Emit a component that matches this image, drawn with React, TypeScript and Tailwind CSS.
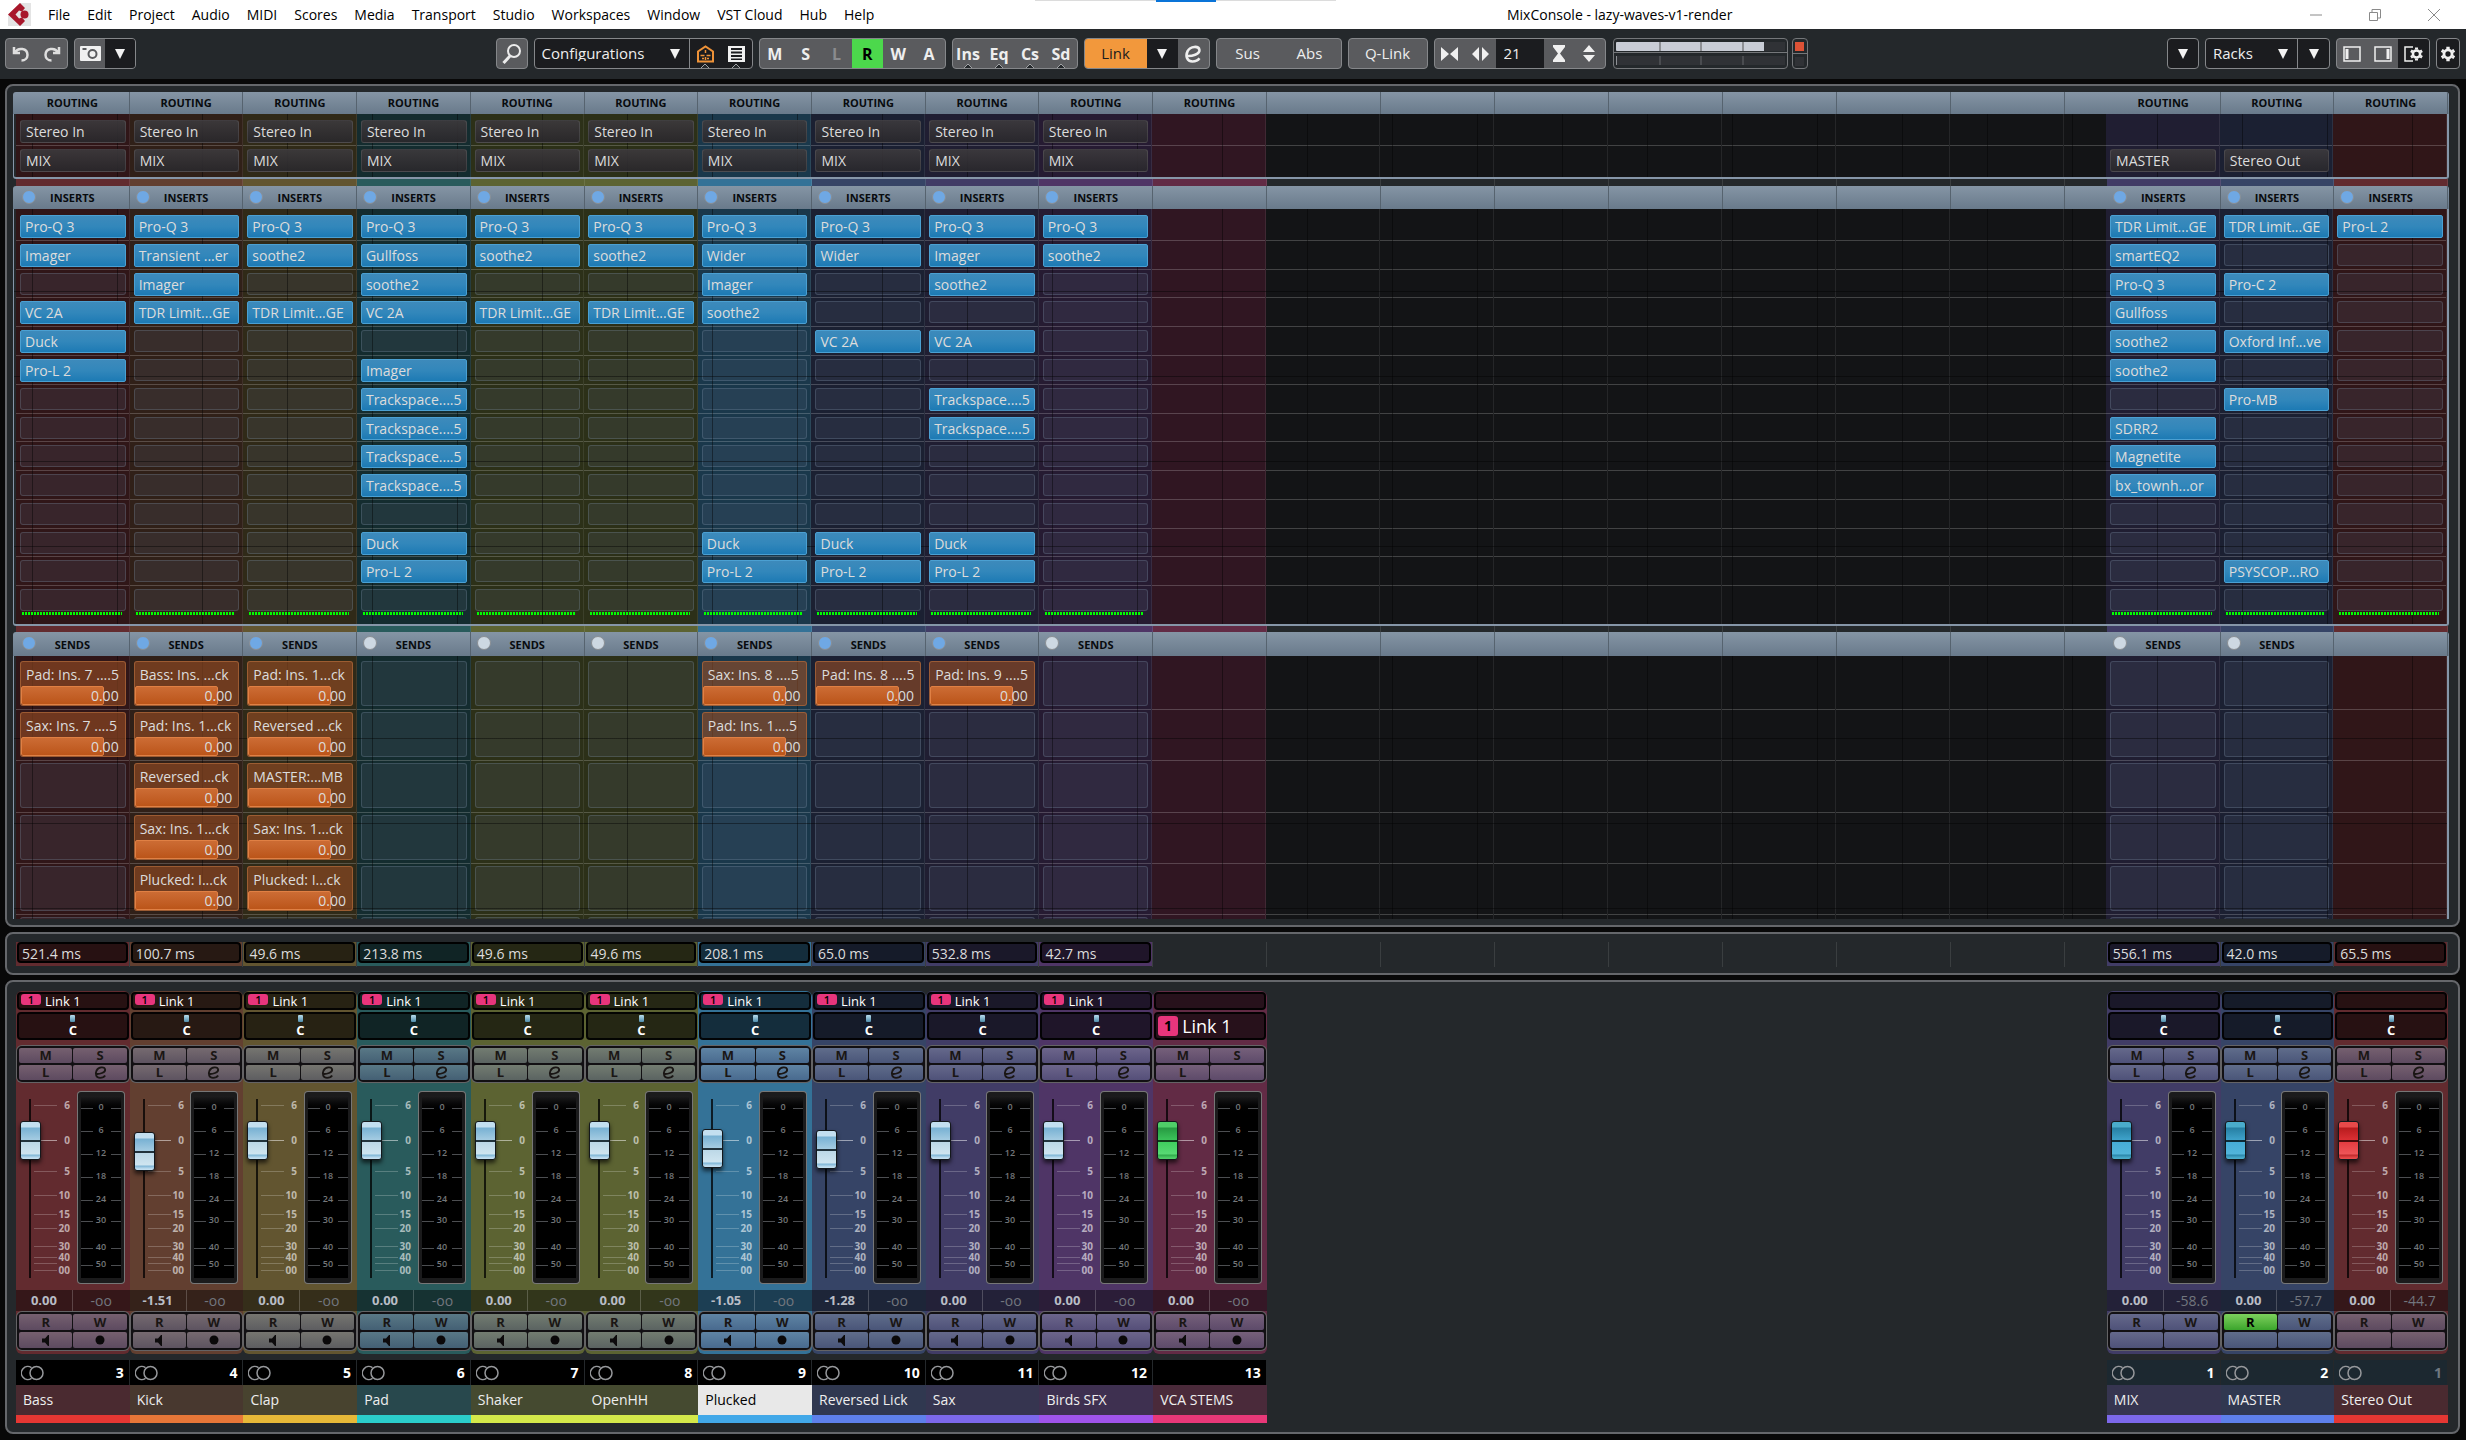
import { Fragment, type ReactNode } from 'react';
import clsx from 'clsx';

type Tone = {
  bright: string;
  dark: string;
  name: string;
  accent: string;
};

type Channel = {
  id: string;
  name: string;
  number: number;
  tone: Tone;
  kind: 'track' | 'vca' | 'group' | 'output';
  routing?: [string | null, string | null];
  inserts?: string[];
  sends?: string[];
  latency?: string;
  level: string;
  peak: string;
  travel: number;
  selected?: boolean;
  readOn?: boolean;
};

const RED: Tone = { bright: 'bg-[#622b2f]', dark: 'bg-[#301618]', name: 'bg-[#4a2a30]', accent: 'bg-[#e53733]' };
const ORANGE: Tone = { bright: 'bg-[#623f30]', dark: 'bg-[#302018]', name: 'bg-[#48382f]', accent: 'bg-[#e67638]' };
const AMBER: Tone = { bright: 'bg-[#625530]', dark: 'bg-[#302a18]', name: 'bg-[#48432f]', accent: 'bg-[#e6b838]' };
const TEAL: Tone = { bright: 'bg-[#295b5c]', dark: 'bg-[#142c2f]', name: 'bg-[#28484d]', accent: 'bg-[#2bcdcb]' };
const LIME: Tone = { bright: 'bg-[#5c6332]', dark: 'bg-[#2c3018]', name: 'bg-[#454a30]', accent: 'bg-[#d4e84a]' };
const SKY: Tone = { bright: 'bg-[#347297]', dark: 'bg-[#1a384b]', name: 'bg-[#e8e8e8]', accent: 'bg-[#42a8e8]' };
const BLUE: Tone = { bright: 'bg-[#364466]', dark: 'bg-[#1b2032]', name: 'bg-[#303850]', accent: 'bg-[#5e80ea]' };
const INDIGO: Tone = { bright: 'bg-[#413c66]', dark: 'bg-[#201e32]', name: 'bg-[#363550]', accent: 'bg-[#7c68ea]' };
const PURPLE: Tone = { bright: 'bg-[#4f3566]', dark: 'bg-[#261b32]', name: 'bg-[#3e3050]', accent: 'bg-[#a054ea]' };
const PINK: Tone = { bright: 'bg-[#622b45]', dark: 'bg-[#301622]', name: 'bg-[#4a2a3a]', accent: 'bg-[#e83878]' };

const INPUT: [string, string] = ['Stereo In', 'MIX'];

const TRACKS: Channel[] = [
  {
    id: 'bass', name: 'Bass', number: 3, tone: RED, kind: 'track', routing: INPUT,
    inserts: ['Pro-Q 3', 'Imager', '', 'VC 2A', 'Duck', 'Pro-L 2'],
    sends: ['Pad: Ins. 7 ....5', 'Sax: Ins. 7 ....5'],
    latency: '521.4 ms', level: '0.00', peak: '-oo', travel: 130
  },
  {
    id: 'kick', name: 'Kick', number: 4, tone: ORANGE, kind: 'track', routing: INPUT,
    inserts: ['Pro-Q 3', 'Transient ...er', 'Imager', 'TDR Limit...GE'],
    sends: ['Bass: Ins. ...ck', 'Pad: Ins. 1...ck', 'Reversed ...ck', 'Sax: Ins. 1...ck', 'Plucked: I...ck'],
    latency: '100.7 ms', level: '-1.51', peak: '-oo', travel: 119
  },
  {
    id: 'clap', name: 'Clap', number: 5, tone: AMBER, kind: 'track', routing: INPUT,
    inserts: ['Pro-Q 3', 'soothe2', '', 'TDR Limit...GE'],
    sends: ['Pad: Ins. 1...ck', 'Reversed ...ck', 'MASTER:...MB', 'Sax: Ins. 1...ck', 'Plucked: I...ck'],
    latency: '49.6 ms', level: '0.00', peak: '-oo', travel: 130
  },
  {
    id: 'pad', name: 'Pad', number: 6, tone: TEAL, kind: 'track', routing: INPUT,
    inserts: [
      'Pro-Q 3', 'Gullfoss', 'soothe2', 'VC 2A', '', 'Imager', 'Trackspace....5', 'Trackspace....5',
      'Trackspace....5', 'Trackspace....5', '', 'Duck', 'Pro-L 2'
    ],
    sends: [],
    latency: '213.8 ms', level: '0.00', peak: '-oo', travel: 130
  },
  {
    id: 'shaker', name: 'Shaker', number: 7, tone: LIME, kind: 'track', routing: INPUT,
    inserts: ['Pro-Q 3', 'soothe2', '', 'TDR Limit...GE'], sends: [],
    latency: '49.6 ms', level: '0.00', peak: '-oo', travel: 130
  },
  {
    id: 'openhh', name: 'OpenHH', number: 8, tone: LIME, kind: 'track', routing: INPUT,
    inserts: ['Pro-Q 3', 'soothe2', '', 'TDR Limit...GE'], sends: [],
    latency: '49.6 ms', level: '0.00', peak: '-oo', travel: 130
  },
  {
    id: 'plucked', name: 'Plucked', number: 9, tone: SKY, kind: 'track', routing: INPUT,
    inserts: ['Pro-Q 3', 'Wider', 'Imager', 'soothe2', '', '', '', '', '', '', '', 'Duck', 'Pro-L 2'],
    sends: ['Sax: Ins. 8 ....5', 'Pad: Ins. 1....5'],
    latency: '208.1 ms', level: '-1.05', peak: '-oo', travel: 122, selected: true
  },
  {
    id: 'reversed', name: 'Reversed Lick', number: 10, tone: BLUE, kind: 'track', routing: INPUT,
    inserts: ['Pro-Q 3', 'Wider', '', '', 'VC 2A', '', '', '', '', '', '', 'Duck', 'Pro-L 2'],
    sends: ['Pad: Ins. 8 ....5'],
    latency: '65.0 ms', level: '-1.28', peak: '-oo', travel: 121
  },
  {
    id: 'sax', name: 'Sax', number: 11, tone: INDIGO, kind: 'track', routing: INPUT,
    inserts: [
      'Pro-Q 3', 'Imager', 'soothe2', '', 'VC 2A', '', 'Trackspace....5', 'Trackspace....5', '', '', '', 'Duck', 'Pro-L 2'
    ],
    sends: ['Pad: Ins. 9 ....5'],
    latency: '532.8 ms', level: '0.00', peak: '-oo', travel: 130
  },
  {
    id: 'birds', name: 'Birds SFX', number: 12, tone: PURPLE, kind: 'track', routing: INPUT,
    inserts: ['Pro-Q 3', 'soothe2'], sends: [],
    latency: '42.7 ms', level: '0.00', peak: '-oo', travel: 130
  },
  { id: 'vca', name: 'VCA STEMS', number: 13, tone: PINK, kind: 'vca', level: '0.00', peak: '-oo', travel: 130 }
];

const OUTPUTS: Channel[] = [
  {
    id: 'mix', name: 'MIX', number: 1, tone: INDIGO, kind: 'group', routing: [null, 'MASTER'],
    inserts: [
      'TDR Limit...GE', 'smartEQ2', 'Pro-Q 3', 'Gullfoss', 'soothe2', 'soothe2', '', 'SDRR2', 'Magnetite', 'bx_townh...or'
    ],
    sends: [], latency: '556.1 ms', level: '0.00', peak: '-58.6', travel: 130
  },
  {
    id: 'master', name: 'MASTER', number: 2, tone: BLUE, kind: 'group', routing: [null, 'Stereo Out'],
    inserts: ['TDR Limit...GE', '', 'Pro-C 2', '', 'Oxford Inf...ve', '', 'Pro-MB', '', '', '', '', '', 'PSYSCOP...RO'],
    sends: [], latency: '42.0 ms', level: '0.00', peak: '-57.7', travel: 130, readOn: true
  },
  {
    id: 'out', name: 'Stereo Out', number: 1, tone: RED, kind: 'output',
    inserts: ['Pro-L 2'], latency: '65.5 ms', level: '0.00', peak: '-44.7', travel: 130
  }
];

const MENUS = [
  'File', 'Edit', 'Project', 'Audio', 'MIDI', 'Scores', 'Media', 'Transport', 'Studio',
  'Workspaces', 'Window', 'VST Cloud', 'Hub', 'Help'
];

const EMPTY_COLUMNS = [0, 1, 2, 3, 4, 5, 6, 7];
const INSERT_ROWS = Array.from({ length: 14 }, (_, i) => i);
const SEND_ROWS = [0, 1, 2, 3, 4, 5];

// [label, y of the tick]
const FADER_MARKS: [string, number][] = [
  ['6', 22], ['0', 57], ['5', 88], ['10', 112], ['15', 131], ['20', 145], ['30', 163], ['40', 174], ['', 180], ['00', 187]
];
const METER_MARKS: [string, number][] = [
  ['0', 17], ['6', 40], ['12', 63], ['18', 86], ['24', 109], ['30', 130], ['40', 157], ['50', 174]
];

export default function App() {
  return (
    <div className="min-h-screen bg-[#080808] font-['Open_Sans','Noto_Sans',sans-serif] text-sm text-[#dcdcdc]">
      <MenuBar />
      <Toolbar />
      <main className="mr-[6px] ml-[5px] flex flex-col gap-[5px] pt-[5px]">
        <Panel className="pt-[6px] pr-[9px] pb-[6px] pl-[6px]">
          <Racks />
        </Panel>
        <Panel className="pt-2 pr-[10px] pb-[6px] pl-[9px]">
          <ConsoleRow render={(channel) => <LatencyCell channel={channel} />} />
        </Panel>
        <Panel className="pt-[9px] pr-[10px] pb-[9px] pl-[9px]">
          <ConsoleRow render={(channel) => (channel ? <Strip channel={channel} /> : null)} />
        </Panel>
      </main>
    </div>
  );
}

function Panel({ className, children }: { className: string; children: ReactNode }) {
  return (
    <section className={clsx('rounded-lg border-2 border-[#65676b] bg-[#24282b]', className)}>{children}</section>
  );
}

/** Lays one cell per channel: tracks left, unused columns in between, outputs right. */
function ConsoleRow({ render }: { render: (channel: Channel | null) => ReactNode }) {
  return (
    <div className="grid grid-cols-[minmax(0,11fr)_840px_minmax(0,3fr)]">
      <div className="grid grid-cols-11">
        {TRACKS.map((channel) => (
          <Fragment key={channel.id}>{render(channel)}</Fragment>
        ))}
      </div>
      <div className="flex overflow-hidden">
        {EMPTY_COLUMNS.map((column) => (
          <div key={column} className="w-[114px] shrink-0">
            {render(null)}
          </div>
        ))}
      </div>
      <div className="grid grid-cols-3">
        {OUTPUTS.map((channel) => (
          <Fragment key={channel.id}>{render(channel)}</Fragment>
        ))}
      </div>
    </div>
  );
}

/* ---------- title and toolbar ---------- */

function MenuBar() {
  return (
    <header className="relative flex h-[29px] items-center bg-white text-black">
      <div className="absolute top-0 left-[1035px] flex h-px w-[301px] justify-center bg-[#dcdcdc]">
        <span className="h-[2px] w-[60px] bg-[#0a74d8]" />
      </div>
      <svg className="mr-[17px] ml-2 h-[23px] w-[23px]" viewBox="0 0 23 23" aria-hidden="true">
        <path d="M12 0h11v23H0V12z" fill="#e4e4e4" />
        <path d="M12 0 17 5l-3 3.500-3-1-3.500 4 3.500 4 3-1 3 3.500L12 23 0 11.500z" fill="#a8172b" />
        <circle cx="16.500" cy="11.500" r="4" fill="#a8172b" />
      </svg>
      <nav className="flex gap-[17px]">
        {MENUS.map((menu) => (
          <button key={menu} type="button">
            {menu}
          </button>
        ))}
      </nav>
      <span className="flex-8" />
      <h1>MixConsole - lazy-waves-v1-render</h1>
      <span className="flex-7" />
      <div className="flex text-[#8a8a8a]">
        <button type="button" aria-label="Minimize" className="flex w-[59px] justify-center">
          <svg className="size-3" viewBox="0 0 12 12"><path d="M0 6h12" stroke="currentColor" /></svg>
        </button>
        <button type="button" aria-label="Restore" className="flex w-[59px] justify-center">
          <svg className="size-3" viewBox="0 0 12 12" fill="none" stroke="currentColor">
            <path d="M.5 3.500h8v8h-8zM3 3V.5h8.500V9H9" />
          </svg>
        </button>
        <button type="button" aria-label="Close" className="mr-[3px] flex w-[59px] justify-center">
          <svg className="size-3" viewBox="0 0 12 12"><path d="M0 0l12 12M12 0L0 12" stroke="currentColor" /></svg>
        </button>
      </div>
    </header>
  );
}

function Group({ dark, className, children }: { dark?: boolean; className?: string; children: ReactNode }) {
  return (
    <div
      className={clsx(
        'relative flex h-[31px] items-stretch overflow-hidden rounded border border-[#85878a]',
        dark ? 'bg-[#1b1c1f]' : 'bg-[#5a5b5e]',
        className
      )}
    >
      {children}
    </div>
  );
}

function ToolButton({ label, className, children }: { label?: string; className?: string; children: ReactNode }) {
  return (
    <button type="button" aria-label={label} className={clsx('relative flex flex-1 items-center justify-center', className)}>
      {children}
    </button>
  );
}

function Triangle() {
  return (
    <svg className="h-[10px] w-[10px]" viewBox="0 0 10 10" aria-hidden="true">
      <path d="M0 0h10L5 10z" fill="#f2f2f2" />
    </svg>
  );
}

function Notch() {
  return (
    <svg className="absolute bottom-[-1px] left-1/2 -ml-[5px] h-[5px] w-[10px]" viewBox="0 0 10 5" aria-hidden="true">
      <path d="M0 5 5 0l5 5" fill="#24282b" stroke="#a0a2a5" />
    </svg>
  );
}

function EditGlyph({ className }: { className: string }) {
  return (
    <svg className={className} viewBox="0 0 14 14" fill="none" stroke="currentColor" strokeWidth="2" aria-hidden="true">
      <path d="M2 8.500C6 9 12.500 7 12 3.800 11.500.5 5 .6 2.800 4.800.8 9 2.500 12.800 6.500 12.800c2.300 0 4.500-1 5.500-2.500" />
    </svg>
  );
}

function Toolbar() {
  return (
    <div className="flex h-[50px] items-start justify-between bg-[#24282b] pt-[9px] pr-[6px] pl-[5px] text-[15px] text-[#eeeeee]">
      <div className="flex gap-[6px]">
        <Group className="w-[63px]">
          <ToolButton label="Undo">
            <svg className="size-5" viewBox="0 0 20 20" fill="none" stroke="#dedede" strokeWidth="2.500">
              <path d="M3 3v6h6M4 8.500C7 3 16.500 4 16.500 11c0 3-2.500 5.500-6 5.500" />
            </svg>
          </ToolButton>
          <ToolButton label="Redo">
            <svg className="size-5" viewBox="0 0 20 20" fill="none" stroke="#dedede" strokeWidth="2.500">
              <path d="M17 3v6h-6M16 8.500C13 3 3.500 4 3.500 11c0 3 2.500 5.500 6 5.500" />
            </svg>
          </ToolButton>
        </Group>
        <Group className="w-[62px]">
          <ToolButton label="Snapshots">
            <svg className="h-[15px] w-[21px]" viewBox="0 0 21 15" aria-hidden="true">
              <rect width="21" height="15" rx="1" fill="#f0f0f0" />
              <circle cx="12.500" cy="8" r="4" fill="none" stroke="#5a5b5e" strokeWidth="2" />
              <path d="M2.500 3h4" stroke="#5a5b5e" strokeWidth="2" />
            </svg>
          </ToolButton>
          <ToolButton label="Snapshot list" className="bg-[#1b1c1f]">
            <Triangle />
          </ToolButton>
        </Group>
      </div>

      <div className="flex gap-[6px]">
        <Group className="w-[32px]">
          <ToolButton label="Find">
            <svg className="h-[22px] w-5" viewBox="0 0 20 22" fill="none" stroke="#ececec" strokeWidth="2">
              <circle cx="12" cy="8" r="6" />
              <path d="M8 13 1.500 20" strokeWidth="3" />
            </svg>
          </ToolButton>
        </Group>
        <Group dark className="w-[219px]">
          <label className="flex w-[155px] items-center border-r border-[#85878a] pl-[7px]">
            <select className="w-[128px] appearance-none leading-none outline-none" aria-label="Configurations">
              <option>Configurations</option>
            </select>
            <Triangle />
          </label>
          <ToolButton label="Visibility">
            <svg className="h-[18px] w-[17px]" viewBox="0 0 17 18" fill="none" stroke="#ee9238" strokeWidth="2">
              <path d="M1 16.500V6.500L8.500 1.500 16 6.500V16.500z" />
              <path d="M8.500 5v3M8.500 12v3M3.500 10.500h4M9.500 10.500h4M5 13.500h2M10 13.500h2" strokeWidth="1.500" />
            </svg>
            <Notch />
          </ToolButton>
          <ToolButton label="Channel list">
            <svg className="h-[16px] w-[17px]" viewBox="0 0 17 16" aria-hidden="true">
              <path d="M0 0h17v16H0zM3 2v2h11V2zM3 5.500v2h11v-2zM3 9v2h11V9zM3 12.500v1.500h11v-1.500z" fill="#f0f0f0" fillRule="evenodd" />
            </svg>
            <Notch />
          </ToolButton>
        </Group>
        <Group className="w-[187px] text-base font-bold">
          {['M', 'S', 'L', 'R', 'W', 'A'].map((letter) => (
            <ToolButton
              key={letter}
              className={clsx(letter === 'R' && 'bg-[#4cd84c] text-black', letter === 'L' && 'text-[#8a8b8e]')}
            >
              {letter}
            </ToolButton>
          ))}
        </Group>
        <Group className="w-[126px] text-base font-bold">
          {['Ins', 'Eq', 'Cs', 'Sd'].map((rack) => (
            <ToolButton key={rack}>
              {rack}
              <Notch />
            </ToolButton>
          ))}
        </Group>
        <Group className="w-[126px]">
          <ToolButton className="flex-2 bg-[#f2983c] text-[#1c1c1c]">Link</ToolButton>
          <ToolButton label="Link options" className="bg-[#1b1c1f]">
            <Triangle />
          </ToolButton>
          <ToolButton label="Edit">
            <EditGlyph className="size-[18px]" />
          </ToolButton>
        </Group>
        <Group className="w-[126px]">
          <ToolButton>Sus</ToolButton>
          <ToolButton>Abs</ToolButton>
        </Group>
        <Group className="w-[80px]">
          <ToolButton>Q-Link</ToolButton>
        </Group>
        <Group className="w-[172px]">
          <ToolButton label="Narrow channels">
            <svg className="h-[14px] w-[17px]" viewBox="0 0 17 14"><path d="M0 0v14l8-7zM17 0v14L9 7z" fill="#f0f0f0" /></svg>
          </ToolButton>
          <ToolButton label="Widen channels">
            <svg className="h-[14px] w-[17px]" viewBox="0 0 17 14"><path d="M7 0v14L0 7zM10 0v14l7-7z" fill="#f0f0f0" /></svg>
          </ToolButton>
          <input
            aria-label="Channel width"
            defaultValue="21"
            className="w-12 bg-[#1b1c1f] pl-2 outline-none"
          />
          <ToolButton label="Lower racks">
            <svg className="h-[17px] w-[14px]" viewBox="0 0 14 17"><path d="M1 0h12v2L8 8.500l5 6.500v2H1v-2l5-6.500L1 2z" fill="#f0f0f0" /></svg>
          </ToolButton>
          <ToolButton label="Raise racks">
            <svg className="h-[17px] w-[14px]" viewBox="0 0 14 17"><path d="M7 0l6 7H1zM7 17l6-7H1z" fill="#f0f0f0" /></svg>
          </ToolButton>
        </Group>
        <PerformanceMeter />
      </div>

      <div className="flex gap-[6px]">
        <Group dark className="w-8">
          <ToolButton label="Toolbar options">
            <Triangle />
          </ToolButton>
        </Group>
        <Group dark className="w-[125px]">
          <label className="flex w-[92px] items-center border-r border-[#85878a] pl-[7px]">
            <select className="w-[65px] appearance-none leading-none outline-none" aria-label="Racks">
              <option>Racks</option>
            </select>
            <Triangle />
          </label>
          <ToolButton label="Rack options">
            <Triangle />
          </ToolButton>
        </Group>
        <Group className="w-[94px]">
          <ToolButton label="Left zone">
            <svg className="h-4 w-[18px]" viewBox="0 0 18 16" fill="none" stroke="#f0f0f0">
              <path d="M1 1h16v14H1z" strokeWidth="1.500" />
              <path d="M4 3v10" strokeWidth="3" />
            </svg>
          </ToolButton>
          <ToolButton label="Right zone">
            <svg className="h-4 w-[18px]" viewBox="0 0 18 16" fill="none" stroke="#f0f0f0">
              <path d="M1 1h16v14H1z" strokeWidth="1.500" />
              <path d="M14 3v10" strokeWidth="3" />
            </svg>
          </ToolButton>
          <ToolButton label="Window layout" className="bg-[#1b1c1f]">
            <svg className="h-4 w-[19px]" viewBox="0 0 19 16" fill="none" stroke="#f0f0f0">
              <path d="M9 1H1v14h8" strokeWidth="1.500" />
              <Cog x={12.5} y={8} />
            </svg>
          </ToolButton>
        </Group>
        <Group dark className="w-6">
          <ToolButton label="Set up toolbar">
            <svg className="size-[18px]" viewBox="0 0 16 16" fill="none" stroke="#f0f0f0">
              <Cog x={8} y={8} />
            </svg>
          </ToolButton>
        </Group>
      </div>
    </div>
  );
}

function Cog({ x, y }: { x: number; y: number }) {
  return (
    <g transform={`translate(${x} ${y})`}>
      <circle r="3.600" strokeWidth="2.500" />
      <path
        d="M0-4.500V-6.500M0 4.500V6.500M3.900-2.250 5.600-3.250M3.900 2.250 5.600 3.250M-3.900-2.250-5.600-3.250M-3.900 2.250-5.600 3.250"
        strokeWidth="3"
      />
    </g>
  );
}

function PerformanceMeter() {
  return (
    <div className="flex gap-1 pl-px">
      <div className="flex h-[31px] w-[175px] flex-col rounded border border-[#75777a]">
        <div className="flex flex-1 border-b border-[#75777a] px-[2px] pt-[3px]">
          <div className="flex h-[9px] w-full bg-[#303236]">
            <span className="w-[43px] rounded-l-[1px] bg-[#c9cdd6]" />
            <span className="w-[41px] border-l-2 border-[#8e9095] bg-[#c9cdd6]" />
            <span className="w-[42px] border-l-2 border-[#8e9095] bg-[#c9cdd6]" />
            <span className="w-[22px] border-l-2 border-[#8e9095] bg-[#c9cdd6]" />
          </div>
        </div>
        <div className="flex flex-1 px-[2px] py-[3px]">
          <div className="flex w-full bg-[#303236]">
            <span className="w-[43px] border-l border-[#8e9095]" />
            <span className="w-[41px] border-l-2 border-[#4a4c50]" />
            <span className="w-[42px] border-l-2 border-[#4a4c50]" />
            <span className="flex-1 border-l-2 border-[#4a4c50]" />
          </div>
        </div>
      </div>
      <div className="flex h-[31px] w-4 flex-col rounded border border-[#75777a]">
        <span className="flex flex-1 items-center justify-center border-b border-[#75777a]">
          <span className="size-[9px] bg-[#dd5236]" />
        </span>
        <span className="flex flex-1 items-center justify-center">
          <span className="size-[9px] bg-[#303236]" />
        </span>
      </div>
    </div>
  );
}

/* ---------- racks ---------- */

function Racks() {
  return (
    <>
      <RackHeader
        className="h-[22px] leading-[22px]"
        render={(channel) => <HeaderCell title={channel ? 'ROUTING' : null} />}
      />
      <RackBody className="h-[65px] rounded-b-[3px] border-b-2">
        <ConsoleRow render={(channel) => <RoutingCell channel={channel} />} />
      </RackBody>
      <ToneStripe className="h-[7px]" />

      <RackHeader
        className="h-[23px] leading-6"
        render={(channel) => <HeaderCell title={channel?.inserts ? 'INSERTS' : null} active />}
      />
      <RackBody className="h-[417px] rounded-b-[3px] border-b-2">
        <ConsoleRow render={(channel) => <InsertCell channel={channel} />} />
      </RackBody>
      <ToneStripe className="h-[6px]" />

      <RackHeader
        className="h-[24px] leading-[26px]"
        render={(channel) => (
          <HeaderCell title={channel?.sends ? 'SENDS' : null} active={Boolean(channel?.sends?.length)} />
        )}
      />
      <RackBody className="h-[263px]">
        <ConsoleRow render={(channel) => <SendCell channel={channel} />} />
      </RackBody>
    </>
  );
}

function RackHeader({ className, render }: { className: string; render: (channel: Channel | null) => ReactNode }) {
  return (
    <div
      className={clsx(
        'overflow-hidden rounded-t-[3px] bg-linear-to-b from-[#8595a5] to-[#697a8b] pr-px pl-[3px]',
        className
      )}
    >
      <ConsoleRow render={render} />
    </div>
  );
}

function HeaderCell({ title, active }: { title: string | null; active?: boolean }) {
  return (
    <div className="relative h-6 border-r border-[#56636f] text-center font-bold text-[#080b0e]">
      {title && title !== 'ROUTING' ? (
        <span
          className={clsx(
            'absolute top-1 left-[6px] size-[14px] rounded-full border border-[#8a8f94]',
            active ? 'bg-[#6fa8e4]' : 'bg-[#cdd8e2]'
          )}
        />
      ) : null}
      {title ? <p className="text-[11px] leading-[inherit]">{title}</p> : null}
    </div>
  );
}

function RackBody({ className, children }: { className: string; children: ReactNode }) {
  return (
    <div className={clsx('relative overflow-hidden border-r-2 border-l border-[#8696a8] pl-[2px]', className)}>
      {children}
      <div className="pointer-events-none absolute inset-0 bg-[repeating-linear-gradient(to_right,transparent_0_18px,#00000068_18px_19px,transparent_19px_85px),repeating-linear-gradient(to_bottom,transparent_0_82px,#00000068_82px_83px,transparent_83px_85px)]" />
    </div>
  );
}

function ToneStripe({ className }: { className: string }) {
  return (
    <div className="pr-px pl-[3px]">
      <ConsoleRow
        render={(channel) => (
          <div className={clsx('border-r border-white/10', className, channel?.tone.bright)} />
        )}
      />
    </div>
  );
}

function Column({ channel, className, children }: { channel: Channel | null; className: string; children: ReactNode }) {
  return (
    <div className={clsx('border-r border-white/8 pt-[3px]', className, channel ? channel.tone.dark : 'bg-[#131416]')}>
      {children}
    </div>
  );
}

function RoutingCell({ channel }: { channel: Channel | null }) {
  return (
    <Column channel={channel} className="h-[63px]">
      {[0, 1].map((row) => (
        <div key={row} className={clsx('h-[29px] pt-[3px] pr-[3px] pl-1', row === 0 && 'border-b border-white/20')}>
          {channel?.routing?.[row] ? (
            <button
              type="button"
              className="relative z-10 block h-[23px] w-full rounded-[3px] border border-white/10 bg-linear-to-b from-[#3d3a3d]/90 to-[#2a282c]/90 pl-[5px] text-left leading-[22px]"
            >
              {channel.routing[row]}
            </button>
          ) : null}
        </div>
      ))}
    </Column>
  );
}

function InsertCell({ channel }: { channel: Channel | null }) {
  return (
    <Column channel={channel} className="h-[415px]">
      <div className="grid h-[403px] grid-rows-14">
        {INSERT_ROWS.map((row) => (
          <div key={row} className={clsx('pt-[3px] pr-[3px] pl-1', row < 13 && 'border-b border-white/20')}>
            {channel?.inserts ? <InsertSlot plugin={channel.inserts[row]} /> : null}
            {channel?.inserts && row === 13 ? (
              <div className="relative z-10 mt-px mr-1 ml-[2px] h-[3px] bg-[repeating-linear-gradient(to_right,#00ff00_0_2px,transparent_2px_3px)]" />
            ) : null}
          </div>
        ))}
      </div>
    </Column>
  );
}

function InsertSlot({ plugin }: { plugin?: string }) {
  if (!plugin) {
    return (
      <button
        type="button"
        aria-label="Empty insert"
        className="block h-[22px] w-full rounded-[3px] border border-[#8aa0b8]/25 bg-[#5a6478]/20"
      />
    );
  }
  return (
    <button
      type="button"
      className="relative z-10 block h-[23px] w-full overflow-hidden rounded-[2px] border border-[#4ba0d2] bg-linear-to-b from-[#3d8abb] via-[#3287bb] to-[#1c7ab4] pl-1 text-left leading-[22px] whitespace-nowrap"
    >
      {plugin}
    </button>
  );
}

function SendCell({ channel }: { channel: Channel | null }) {
  return (
    <Column channel={channel} className="h-[310px]">
      <div className="grid h-[307px] grid-rows-6">
        {SEND_ROWS.map((row) => (
          <div key={row} className="border-b border-white/20 pt-[2px] pr-[3px] pl-1">
            {channel?.sends ? <SendSlot target={channel.sends[row]} /> : null}
          </div>
        ))}
      </div>
    </Column>
  );
}

function SendSlot({ target }: { target?: string }) {
  if (!target) {
    return (
      <button
        type="button"
        aria-label="Empty send"
        className="block h-[45px] w-full rounded-[3px] border border-[#8aa0b8]/25 bg-[#5a6478]/20"
      />
    );
  }
  return (
    <div className="relative z-10 h-[45px] overflow-hidden rounded-[3px] border border-[#b06a3c]/70 bg-[#9a4e24]/60">
      <button type="button" className="block h-6 w-full pl-[5px] text-left leading-[25px] whitespace-nowrap">
        {target}
      </button>
      <div className="h-[19px] w-4/5 rounded-[2px] border border-[#e08044] bg-linear-to-b from-[#cc6c34] to-[#bb5519]" />
      <span className="absolute right-[6px] bottom-0 leading-[18px]">0.00</span>
    </div>
  );
}

/* ---------- latency and faders ---------- */

function LatencyCell({ channel }: { channel: Channel | null }) {
  return (
    <div className="h-[25px] border-r border-white/10">
      {channel?.latency ? (
        <div className={clsx('h-6 px-px', channel.tone.bright)}>
          <div className="h-[21px] rounded border-2 border-black bg-black/60 pl-[3px] leading-[20px]">
            {channel.latency}
          </div>
        </div>
      ) : null}
    </div>
  );
}

function Strip({ channel }: { channel: Channel }) {
  const { tone, kind } = channel;
  const isVca = kind === 'vca';
  const isTrack = kind === 'track';
  const hasTransport = isTrack || isVca;

  return (
    <article>
      <div className={clsx('rounded-md pt-px pb-[3px]', tone.bright)}>
        <div className="mx-px flex h-[18px] items-center gap-1 rounded border-2 border-black/90 bg-black/60 pl-[2px] text-[13px] text-white">
          {isTrack ? (
            <>
              <span className="mb-[3px] h-[11px] w-5 rounded-[3px] bg-[#e8357c] text-center text-[11px] leading-[11px] font-semibold text-black">
                1
              </span>
              <span className="leading-4">Link 1</span>
            </>
          ) : null}
        </div>
        <div className="mx-px mt-[2px] h-[28px] rounded border-2 border-black/90 bg-black/60">
          {isVca ? (
            <div className="flex items-center gap-1 pl-[2px] text-lg leading-6 text-white">
              <span className="size-5 rounded-[3px] bg-[#e8357c] text-center text-sm leading-[19px] font-bold text-black">1</span>
              Link 1
            </div>
          ) : (
            <div className="flex flex-col items-center text-white">
              <span className="mt-px h-[7px] w-[5px] rounded-[1px] bg-linear-to-b from-[#b8dcec] to-[#4f8eac]" />
              <span className="text-[13px] leading-4 font-bold">C</span>
            </div>
          )}
        </div>

        <ButtonBlock className="mt-[5px] h-[38px]">
          <StripButton tone={tone}>M</StripButton>
          <StripButton tone={tone}>S</StripButton>
          <StripButton tone={tone}>L</StripButton>
          <StripButton tone={tone} label="Edit channel">
            {isVca ? null : <EditGlyph className="size-[13px]" />}
          </StripButton>
        </ButtonBlock>

        <div className="flex h-[207px] justify-between pr-[5px]">
          <Fader channel={channel} />
          <Meter />
        </div>

        <div className="grid h-[21px] grid-cols-2 bg-black/45 text-center leading-[21px]">
          <span className="border-r border-white/20 text-[13px] leading-[inherit] font-bold text-[#b9bdc6]">
            {channel.level}
          </span>
          <span className="leading-[inherit] text-[#72767e]">{channel.peak}</span>
        </div>

        <ButtonBlock className="h-10">
          <StripButton tone={tone} lit={channel.readOn}>R</StripButton>
          <StripButton tone={tone}>W</StripButton>
          <StripButton tone={tone} label="Monitor">
            {hasTransport ? (
              <svg className="h-[11px] w-2" viewBox="0 0 8 11"><path d="M0 3.500h3L6 0h1v11H6L3 7.500H0z" fill="#0d0b0c" /></svg>
            ) : null}
          </StripButton>
          <StripButton tone={tone} label="Record enable">
            {hasTransport ? (
              <svg className="size-[10px]" viewBox="0 0 10 10"><circle cx="5" cy="5" r="4.500" fill="#0a0809" /></svg>
            ) : null}
          </StripButton>
        </ButtonBlock>
      </div>

      <div
        className={clsx(
          'mt-[6px] flex h-[25px] items-center justify-between border-r border-[#24282b] px-[5px]',
          hasTransport ? 'bg-black' : 'bg-[#1c2830]'
        )}
      >
        {isVca ? (
          <span />
        ) : (
          <svg className="h-4 w-[23px]" viewBox="0 0 23 16" fill="none" stroke="#96989b" strokeWidth="1.500">
            <path d="M10.500 2.600A6.500 6.500 0 1 0 10.500 13.400" />
            <circle cx="15.500" cy="8" r="6.500" />
          </svg>
        )}
        <span className={clsx('font-bold', kind === 'output' ? 'text-[#6f7880]' : 'text-white')}>{channel.number}</span>
      </div>
      <div
        className={clsx(
          'h-[30px] pl-[7px] leading-[29px] whitespace-nowrap',
          tone.name,
          channel.selected ? 'text-black' : 'text-[#eeeeee]'
        )}
      >
        {channel.name}
      </div>
      <div className={clsx('h-2', tone.accent)} />
    </article>
  );
}

function ButtonBlock({ className, children }: { className: string; children: ReactNode }) {
  return (
    <div
      className={clsx(
        'grid grid-cols-2 grid-rows-2 gap-x-px gap-y-[2px] rounded-md border border-white/35 bg-[#121013] p-[2px]',
        className
      )}
    >
      {children}
    </div>
  );
}

function StripButton({ tone, lit, label, children }: { tone: Tone; lit?: boolean; label?: string; children: ReactNode }) {
  return (
    <button
      type="button"
      aria-label={label}
      className={clsx(
        'flex min-h-0 items-center justify-center rounded-[2px] bg-linear-to-b text-[13px] leading-none font-bold',
        lit
          ? 'from-[#7cd05c] to-[#3aa52c] text-black'
          : [tone.bright, 'from-[#8a96b0]/50 to-[#5a6488]/55 text-[#1a1614]']
      )}
    >
      {children}
    </button>
  );
}

const CAP_COLORS = {
  track: '[&::-webkit-slider-thumb]:bg-[linear-gradient(#c3dff0_0_5px,#78b1d3_6px,#a5cce2_18px,#22333c_18px_20px,#bcd8e7_20px,#cfe5f0_32px,#7fb6d6_33px,#c3dff0_36px)]',
  vca: '[&::-webkit-slider-thumb]:bg-[linear-gradient(#4fce68_0_5px,#279a42_6px,#3cc35a_18px,#123b1b_18px_20px,#3fce5e_20px,#58da74_32px,#2faa4b_33px,#4fce68_36px)]',
  group: '[&::-webkit-slider-thumb]:bg-[linear-gradient(#4aaccb_0_5px,#267fa3_6px,#3fa3cb_18px,#0f2c38_18px_20px,#46acd6_20px,#52b5da_32px,#2a86aa_33px,#4aaccb_36px)]',
  output: '[&::-webkit-slider-thumb]:bg-[linear-gradient(#e84a4a_0_5px,#b81c1e_6px,#dc3034_18px,#4a0c0c_18px_20px,#e23c40_20px,#ee5558_32px,#c02a2c_33px,#e84a4a_36px)]'
};

function Fader({ channel }: { channel: Channel }) {
  return (
    <div className="relative w-14">
      <svg className="h-[207px] w-14" viewBox="0 0 56 207" aria-hidden="true">
        <path d="M14 16v179" stroke="#000" strokeOpacity="0.75" strokeWidth="2" />
        {FADER_MARKS.map(([label, y]) => (
          <g key={y}>
            <path d={`M18 ${y}.5h23`} stroke="#fff" strokeOpacity={label === '0' ? 0.5 : 0.22} />
            <text x="54" y={y + 4} textAnchor="end" fill="#fff" fillOpacity="0.6" className="text-[10px] font-bold">
              {label}
            </text>
          </g>
        ))}
      </svg>
      <input
        type="range"
        aria-label={`${channel.name} level`}
        min={0}
        max={165}
        defaultValue={channel.travel}
        className={clsx(
          'absolute top-[3px] left-1 h-[204px] w-[21px] appearance-none bg-transparent [direction:rtl] [writing-mode:vertical-lr]',
          '[&::-webkit-slider-thumb]:h-[39px] [&::-webkit-slider-thumb]:w-[21px] [&::-webkit-slider-thumb]:appearance-none',
          '[&::-webkit-slider-thumb]:rounded-[3px] [&::-webkit-slider-thumb]:border [&::-webkit-slider-thumb]:border-[#14181c]',
          '[&::-webkit-slider-thumb]:shadow-[0_3px_4px_#000000a0]',
          CAP_COLORS[channel.kind]
        )}
      />
    </div>
  );
}

function Meter() {
  return (
    <div className="mt-2 h-[193px] w-12 rounded-[4px] border border-white/40 bg-[#1b1b1c]">
      <div className="mx-[3px] mt-1 h-[182px] bg-linear-to-b from-[#1d1d1e] via-black via-10% to-black">
        <svg className="h-[182px] w-10" viewBox="4 5 40 182" aria-hidden="true">
          {METER_MARKS.map(([label, y]) => (
            <g key={label}>
              <path d={`M4 ${y}.5h12M34 ${y}.5h10`} stroke="#4c4e51" />
              <text x="24" y={y + 2} textAnchor="middle" fill="#74777a" className="text-[9px] font-semibold">
                {label}
              </text>
            </g>
          ))}
        </svg>
      </div>
    </div>
  );
}
